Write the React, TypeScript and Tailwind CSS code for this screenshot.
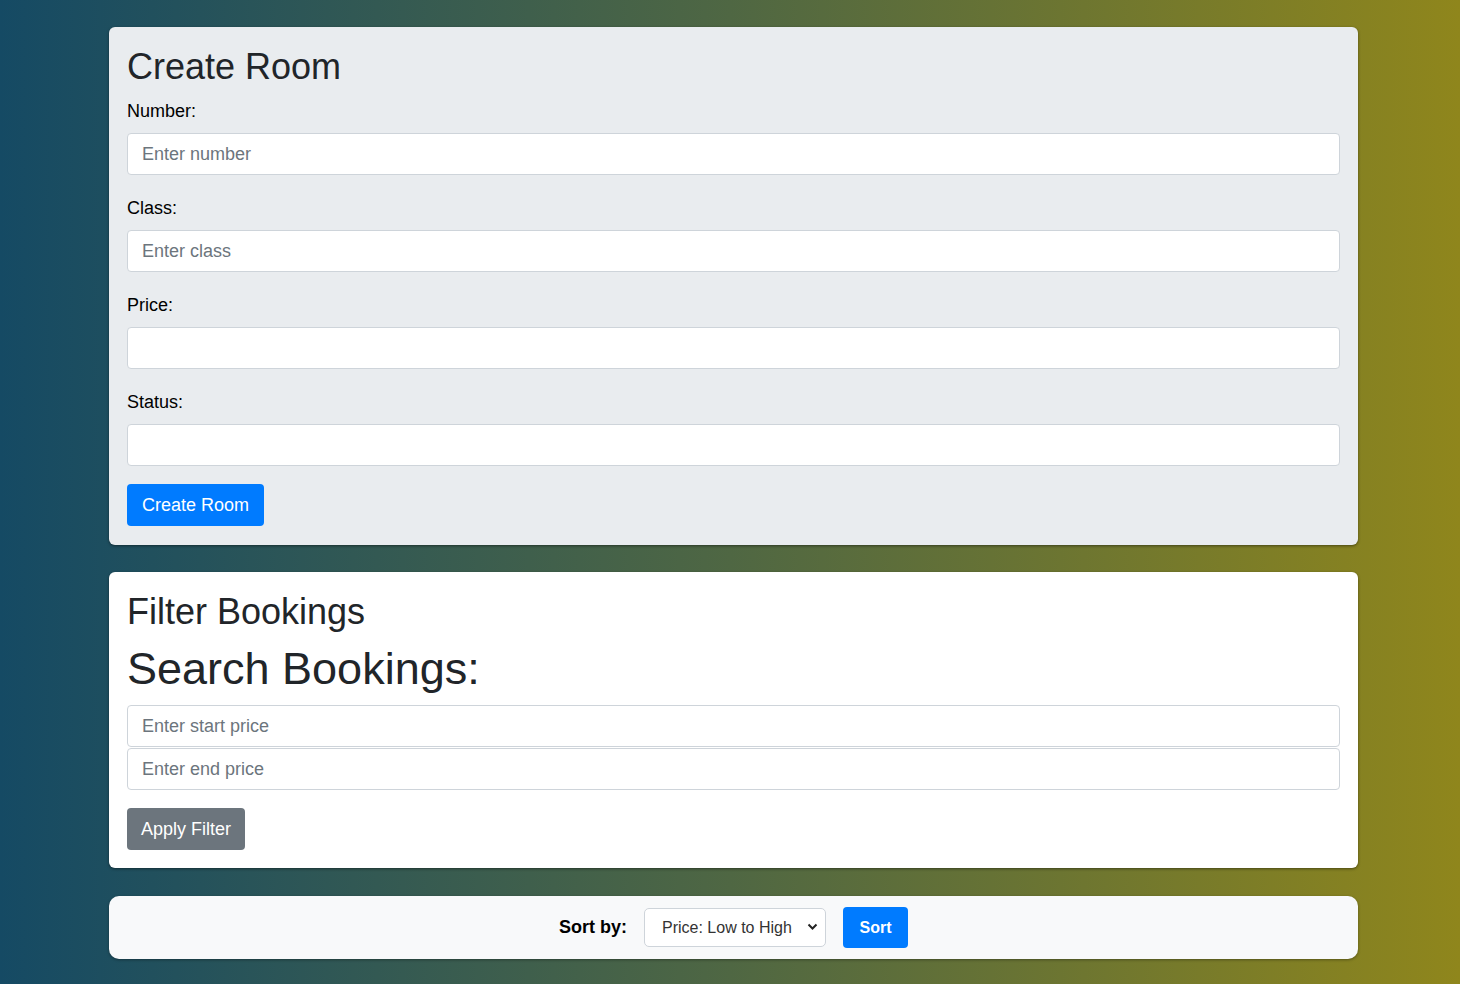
export default function App() {
  return (
    <div className="min-h-screen bg-[linear-gradient(to_right,#154a64,#4f6743_50%,#8f861c)] pt-[27px] pb-[25px] pl-[109px] pr-[102px] font-['Liberation_Sans',Arial,sans-serif] text-[#212529]">
      <div className="flex flex-col gap-[27px]">
        {/* Create room */}
        <div className="rounded-[6px] bg-[#e9ecef] px-[18px] pt-[18px] pb-[19px] shadow-[0_1px_3px_rgba(0,0,0,0.45)]">
          <h2 className="text-[36px] leading-[1.2] mb-[9px]">Create Room</h2>
          <Field label="Number:" placeholder="Enter number" />
          <Field label="Class:" placeholder="Enter class" />
          <Field label="Price:" placeholder="" />
          <Field label="Status:" placeholder="" />
          <button className="-mt-px h-[42px] rounded-[4px] bg-[#007bff] px-[15px] text-[18px] text-white">
            Create Room
          </button>
        </div>

        {/* Filter bookings */}
        <div className="rounded-[6px] bg-white px-[18px] pt-[18px] pb-[18px] shadow-[0_1px_3px_rgba(0,0,0,0.45)]">
          <h2 className="text-[36px] leading-[1.2] mb-[9px]">Filter Bookings</h2>
          <h1 className="text-[45px] leading-[1.2] mb-[9px]">Search Bookings:</h1>
          <input
            className="block h-[42px] w-full rounded-[4px] border border-[#ced4da] bg-white px-[14px] text-[18px] placeholder:text-[#6c757d] outline-none"
            placeholder="Enter start price"
          />
          <input
            className="mt-px block h-[42px] w-full rounded-[4px] border border-[#ced4da] bg-white px-[14px] text-[18px] placeholder:text-[#6c757d] outline-none"
            placeholder="Enter end price"
          />
          <button className="mt-[18px] h-[42px] rounded-[4px] bg-[#6c757d] px-[14px] text-[18px] text-white">
            Apply Filter
          </button>
        </div>

        {/* Sort */}
        <div className="mt-px flex h-[63px] items-center justify-center rounded-[10px] bg-[#f8f9fa] shadow-[0_1px_3px_rgba(0,0,0,0.35)]">
          <span className="mr-[17px] text-[18px] font-bold text-black">Sort by:</span>
          <div className="relative mr-[17px]">
            <select className="h-[39px] w-[182px] appearance-none rounded-[5px] border border-[#ced4da] bg-white pl-[17px] pr-[30px] text-[16px] text-[#333] outline-none">
              <option>Price: Low to High</option>
              <option>Price: High to Low</option>
            </select>
            <svg
              className="pointer-events-none absolute right-[8px] top-[15px]"
              width="11"
              height="8"
              viewBox="0 0 11 8"
            >
              <path d="M1.5 1.5 L5.5 5.5 L9.5 1.5" fill="none" stroke="#222" strokeWidth="2" />
            </svg>
          </div>
          <button className="h-[41px] w-[65px] rounded-[4px] bg-[#007bff] text-[16px] font-bold text-white">
            Sort
          </button>
        </div>
      </div>
    </div>
  );
}

function Field({ label, placeholder }: { label: string; placeholder: string }) {
  return (
    <div className="mb-[19px]">
      <label className="block pt-px text-[18px] leading-[27px] mb-[8px] text-black">{label}</label>
      <input
        className="block h-[42px] w-full rounded-[4px] border border-[#ced4da] bg-white px-[14px] text-[18px] placeholder:text-[#6c757d] outline-none"
        placeholder={placeholder}
      />
    </div>
  );
}
